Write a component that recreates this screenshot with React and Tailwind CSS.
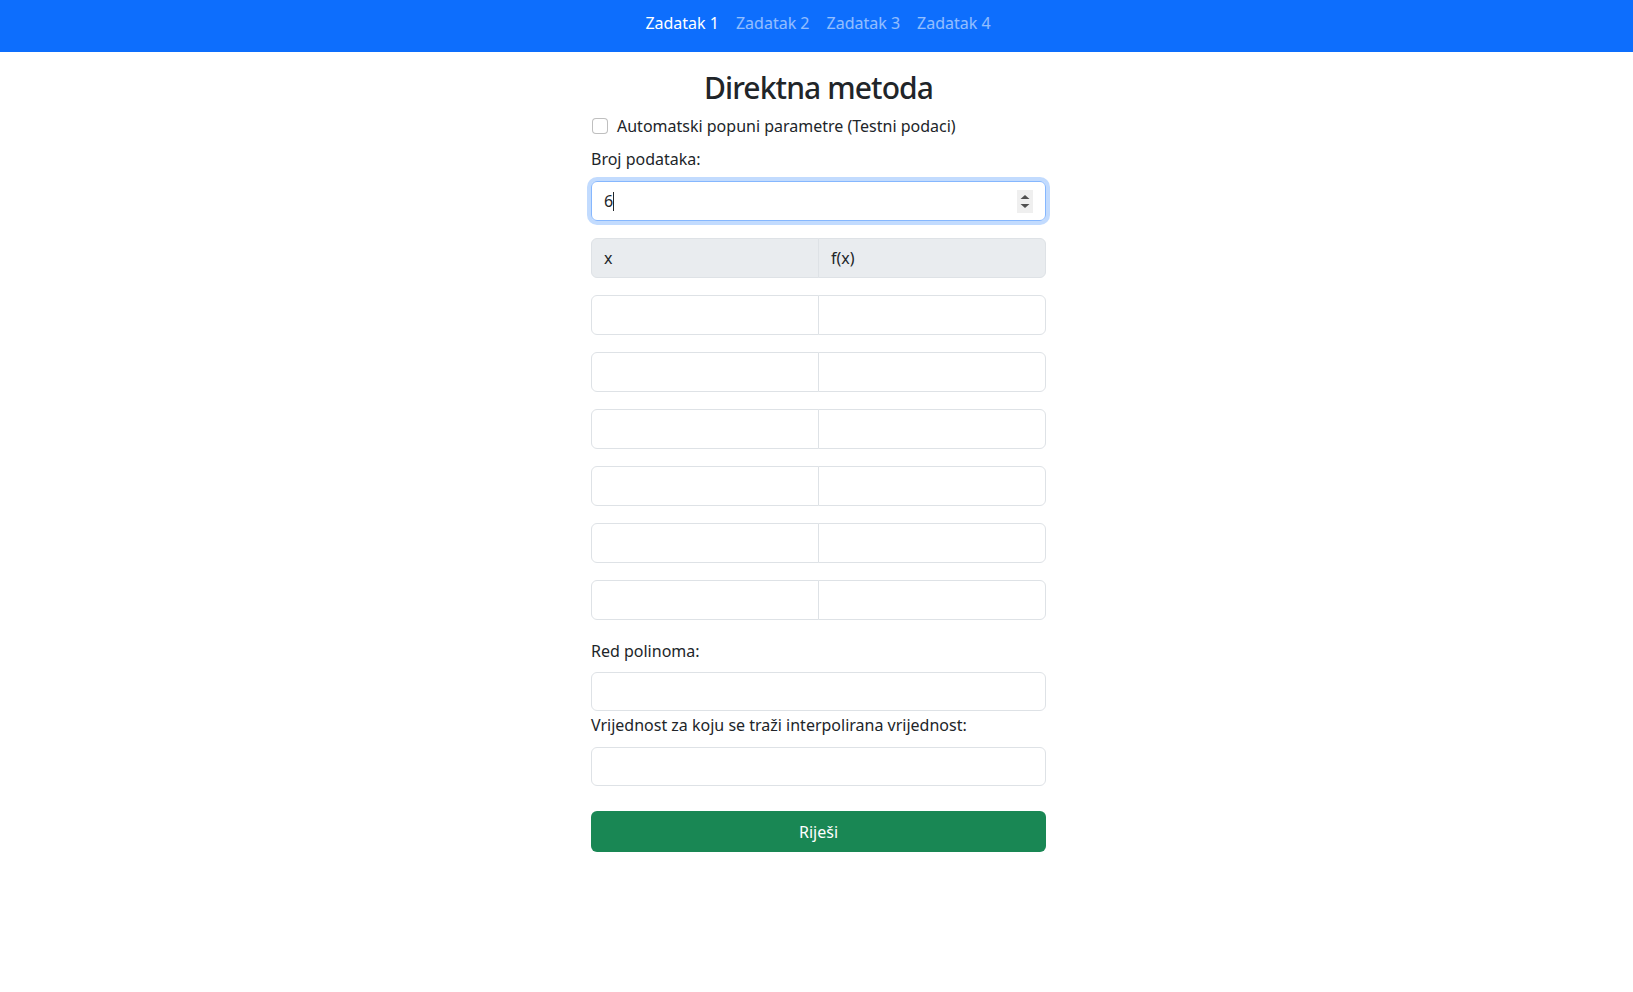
import React from "react";

const links = ["Zadatak 1", "Zadatak 2", "Zadatak 3", "Zadatak 4"];

const PairRow = ({ header }) => {
    if (header) {
        return (
            <div className="flex h-[40px]">
                <span className="flex-1 flex items-center px-3 bg-[#e9ecef] border border-[#dee2e6] rounded-l-[6px]">
                    x
                </span>
                <span className="flex-1 flex items-center px-3 bg-[#e9ecef] border border-[#dee2e6] rounded-r-[6px] -ml-px">
                    f(x)
                </span>
            </div>
        );
    }
    return (
        <div className="flex h-[40px]">
            <input
                type="text"
                className="flex-1 min-w-0 px-3 bg-white border border-[#dee2e6] rounded-l-[6px] outline-none"
            />
            <input
                type="text"
                className="flex-1 min-w-0 px-3 bg-white border border-[#dee2e6] rounded-r-[6px] -ml-px outline-none"
            />
        </div>
    );
};

const App = () => {
    return (
        <div className="min-h-screen bg-white text-[#212529] font-['Noto_Sans',sans-serif] text-base leading-6">
            {/* Navbar */}
            <nav className="h-[52px] bg-[#0d6efd] flex justify-center pt-[11px] pl-[3px]">
                <ul className="flex gap-[17px]">
                    {links.map((l, i) => (
                        <li key={l}>
                            <a
                                href="#"
                                className={i === 0 ? "text-white" : "text-white/55"}
                            >
                                {l}
                            </a>
                        </li>
                    ))}
                </ul>
            </nav>

            <div className="flex justify-center pl-[4px]">
                <main className="w-[455px]">
                    <h2 className="mt-[17px] text-[30px] leading-[38px] font-medium tracking-[-0.9px] text-center">
                        Direktna metoda
                    </h2>

                    <label className="mt-[7px] flex items-center gap-[9px]">
                        <input
                            type="checkbox"
                            className="appearance-none w-4 h-4 ml-px border border-black/25 rounded-[4px] bg-white"
                        />
                        <span>Automatski popuni parametre (Testni podaci)</span>
                    </label>

                    <div className="mt-[9px]">Broj podataka:</div>

                    {/* focused number input */}
                    <div className="mt-[10px] h-[40px] flex items-center pl-3 pr-3 border border-[#86b7fe] rounded-[6px] shadow-[0_0_0_4px_rgba(13,110,253,0.25)]">
                        <span>6</span>
                        <span className="w-px h-[19px] bg-[#212529]" />
                        <div className="ml-auto w-4 h-[23px] bg-[#efefef]">
                            <svg width="16" height="23" viewBox="0 0 16 23">
                                <polygon points="3.5,9 12.5,9 8,5" fill="#505050" />
                                <polygon points="3.5,14 12.5,14 8,18" fill="#505050" />
                            </svg>
                        </div>
                    </div>

                    {/* data table */}
                    <div className="mt-[17px] flex flex-col gap-[17px]">
                        <PairRow header />
                        {[0, 1, 2, 3, 4, 5].map((i) => (
                            <PairRow key={i} />
                        ))}
                    </div>

                    <div className="mt-[19px]">Red polinoma:</div>
                    <input
                        type="text"
                        className="mt-[9px] block w-full h-[39px] px-3 border border-[#dee2e6] rounded-[6px] outline-none"
                    />

                    <div className="mt-[2px]">Vrijednost za koju se traži interpolirana vrijednost:</div>
                    <input
                        type="text"
                        className="mt-[10px] block w-full h-[39px] px-3 border border-[#dee2e6] rounded-[6px] outline-none"
                    />

                    <button className="mt-[25px] w-full h-[41px] bg-[#198754] text-white rounded-[6px]">
                        Riješi
                    </button>
                </main>
            </div>
        </div>
    );
};

export default App;
